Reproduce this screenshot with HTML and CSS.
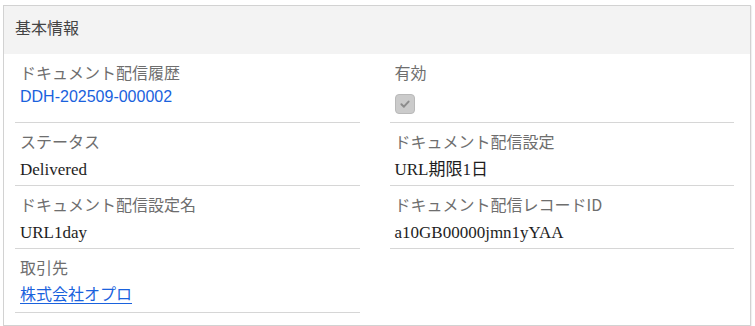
FILE: index.html
```html
<!DOCTYPE html>
<html lang="ja">
<head>
<meta charset="utf-8">
<link rel="stylesheet" href="styles.css">
</head>
<body>
<section class="card">
  <header class="card-header">基本情報</header>
  <div class="grid">
    <div class="field">
      <div class="label">ドキュメント配信履歴</div>
      <div class="value first"><a class="link sans" href="#">DDH-202509-000002</a></div>
    </div>
    <div class="field">
      <div class="label">有効</div>
      <div class="value check-wrap">
        <span class="checkbox">
          <svg viewBox="0 0 20 20" width="20" height="20"><path d="M6 10.3 L8.8 13 L14 7.3" fill="none" stroke="#8c8c8c" stroke-width="2.2" stroke-linecap="round" stroke-linejoin="round"/></svg>
        </span>
      </div>
    </div>
    <div class="field">
      <div class="label">ステータス</div>
      <div class="value">Delivered</div>
    </div>
    <div class="field">
      <div class="label">ドキュメント配信設定</div>
      <div class="value">URL期限1日</div>
    </div>
    <div class="field">
      <div class="label">ドキュメント配信設定名</div>
      <div class="value">URL1day</div>
    </div>
    <div class="field">
      <div class="label">ドキュメント配信レコードID</div>
      <div class="value">a10GB00000jmn1yYAA</div>
    </div>
    <div class="field">
      <div class="label">取引先</div>
      <div class="value link-row"><a class="link underline" href="#">株式会社オプロ</a></div>
    </div>
  </div>
</section>
</body>
</html>
```

FILE: styles.css
```css
html, body {
  margin: 0;
  padding: 0;
  background: #ffffff;
}

body {
  font-family: "Liberation Serif", "Noto Sans CJK JP", serif;
  padding: 5px 4px 0 3px;
}

.card {
  border: 1px solid #d2d2d2;
  box-shadow: 1px 1px 1px rgba(0, 0, 0, 0.06);
  background: #fff;
}

.card-header {
  background: #f3f3f3;
  height: 48px;
  line-height: 42px;
  padding-left: 11px;
  font-family: "Noto Sans CJK JP", sans-serif;
  font-size: 16px;
  color: #444;
}

.grid {
  display: grid;
  grid-template-columns: 1fr 1fr;
  column-gap: 30px;
  padding: 0 16px 12px 11px;
}

.field {
  border-bottom: 1px solid #d6d6d6;
  padding: 7px 5px 2px 5px;
}

.label {
  font-family: "Noto Sans CJK JP", sans-serif;
  font-size: 16px;
  line-height: 22px;
  color: #6e6e6e;
}

.value {
  margin-top: 5px;
  font-family: "Liberation Serif", "Noto Sans CJK JP", serif;
  font-size: 17px;
  line-height: 26px;
  color: #1e1e1e;
}

.value.first {
  margin-top: 1px;
}

.value.link-row {
  margin-top: 2px;
  padding-bottom: 2px;
}

.link {
  color: #1a62dd;
  text-decoration: none;
}

.link.sans {
  font-family: "Liberation Sans", sans-serif;
  font-size: 16px;
}

.link.underline {
  font-family: "Noto Sans CJK JP", sans-serif;
  font-size: 16px;
  text-decoration: underline;
  text-underline-offset: 3px;
}

.check-wrap {
  padding: 6px 0 6px 0;
  line-height: 0;
}

.checkbox {
  display: inline-block;
  width: 18px;
  height: 18px;
  border: 1px solid #b9b9b9;
  border-radius: 4px;
  background: #cbcbcb;
}

.checkbox svg {
  display: block;
  width: 18px;
  height: 18px;
}
```
